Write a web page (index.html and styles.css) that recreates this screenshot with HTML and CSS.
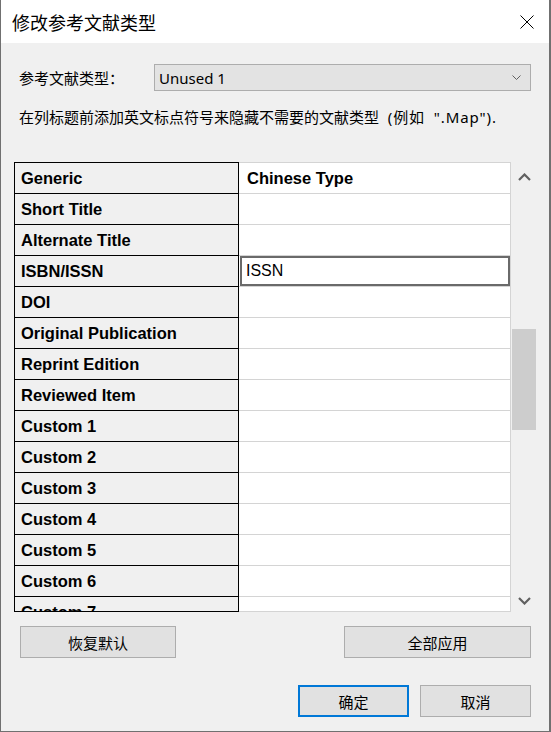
FILE: index.html
```html
<!DOCTYPE html>
<html lang="zh-CN">
<head>
<meta charset="utf-8">
<title>修改参考文献类型</title>
<link rel="stylesheet" href="styles.css">
</head>
<body>
<div class="window">
  <div class="titlebar">
    <div class="title">修改参考文献类型</div>
    <div class="close">
      <svg width="14" height="14" viewBox="0 0 14 14"><path d="M0.5 0.5 L13.5 13.5 M13.5 0.5 L0.5 13.5" stroke="#000" stroke-width="1" fill="none"/></svg>
    </div>
  </div>
  <div class="content">
    <div class="type-row">
      <div class="label">参考文献类型：</div>
      <div class="combo">
        <span class="combo-text">Unused 1</span>
        <svg class="combo-arrow" width="9" height="5" viewBox="0 0 9 5"><path d="M0.5 0.5 L4.5 4.5 L8.5 0.5" stroke="#606060" stroke-width="1" fill="none"/></svg>
      </div>
    </div>
    <div class="hint">在列标题前添加英文标点符号来隐藏不需要的文献类型<span class="hint-tail"> (例如 ".Map").</span></div>
    <div class="grid">
      <div class="col col-left">
        <div class="cell">Generic</div>
        <div class="cell">Short Title</div>
        <div class="cell">Alternate Title</div>
        <div class="cell">ISBN/ISSN</div>
        <div class="cell">DOI</div>
        <div class="cell">Original Publication</div>
        <div class="cell">Reprint Edition</div>
        <div class="cell">Reviewed Item</div>
        <div class="cell">Custom 1</div>
        <div class="cell">Custom 2</div>
        <div class="cell">Custom 3</div>
        <div class="cell">Custom 4</div>
        <div class="cell">Custom 5</div>
        <div class="cell">Custom 6</div>
        <div class="cell">Custom 7</div>
      </div>
      <div class="col col-right">
        <div class="cell head">Chinese Type</div>
        <div class="cell"></div>
        <div class="cell"></div>
        <div class="cell cell-edit"><div class="edit">ISSN</div></div>
        <div class="cell"></div>
        <div class="cell"></div>
        <div class="cell"></div>
        <div class="cell"></div>
        <div class="cell"></div>
        <div class="cell"></div>
        <div class="cell"></div>
        <div class="cell"></div>
        <div class="cell"></div>
        <div class="cell"></div>
        <div class="cell"></div>
      </div>
      <div class="scrollbar">
        <svg class="arrow" width="13" height="8" viewBox="0 0 13 8"><path d="M1 7 L6.5 1.5 L12 7" stroke="#606060" stroke-width="2.2" fill="none"/></svg>
        <div class="track"><div class="thumb"></div></div>
        <svg class="arrow" width="13" height="8" viewBox="0 0 13 8"><path d="M1 1 L6.5 6.5 L12 1" stroke="#606060" stroke-width="2.2" fill="none"/></svg>
      </div>
    </div>
    <div class="btn-row">
      <button class="btn btn-restore">恢复默认</button>
      <button class="btn btn-apply">全部应用</button>
    </div>
    <div class="btn-row end">
      <button class="btn btn-dlg default">确定</button>
      <button class="btn btn-dlg">取消</button>
    </div>
  </div>
</div>
</body>
</html>
```
FILE: styles.css
```css
* { box-sizing: border-box; }
html, body { margin: 0; padding: 0; }
body {
  width: 551px;
  height: 732px;
  overflow: hidden;
  font-family: "Noto Sans", "Noto Sans CJK SC", sans-serif;
  font-size: 15px;
  color: #000;
}
.window {
  width: 551px;
  height: 732px;
  border-left: 1px solid #707070;
  border-right: 2px solid #707070;
  border-bottom: 1px solid #707070;
  background: #f0f0f0;
  display: flex;
  flex-direction: column;
}
.titlebar {
  height: 43px;
  background: #fff;
  display: flex;
  align-items: center;
  justify-content: space-between;
  flex: 0 0 43px;
}
.title {
  font-family: "Noto Sans CJK SC", sans-serif;
  font-size: 18px;
  padding-left: 11px;
  line-height: 24px;
}
.close {
  width: 14px;
  height: 14px;
  margin-right: 15px;
  margin-top: 1px;
  display: flex;
}
.content {
  flex: 1;
  display: flex;
  flex-direction: column;
}
.type-row {
  margin: 21px 18px 0 18px;
  height: 27px;
  display: flex;
  align-items: center;
}
.label {
  flex: 0 0 135px;
  font-family: "Noto Sans CJK SC", sans-serif;
  line-height: 20px;
}
.combo {
  flex: 1;
  height: 27px;
  background: #e3e3e3;
  border: 1px solid #adadad;
  display: flex;
  align-items: center;
  justify-content: space-between;
  padding: 0 9px 0 4px;
}
.combo-text { line-height: 20px; }
.hint {
  margin: 16px 18px 0 18px;
  line-height: 20px;
  height: 20px;
  white-space: nowrap;
}
.hint-tail { letter-spacing: 0.9px; word-spacing: 4px; }
.grid {
  margin: 35px 0 0 13px;
  height: 450px;
  display: flex;
}
.col {
  height: 450px;
  overflow: hidden;
  display: flex;
  flex-direction: column;
}
.col-left {
  width: 225px;
  border: 1px solid #000;
  background: #f0f0f0;
}
.col-right {
  width: 272px;
  border-top: 1px solid #d4d4d4;
  border-right: 1px solid #d4d4d4;
  border-bottom: 1px solid #d4d4d4;
  background: #fff;
}
.cell {
  flex: 0 0 31px;
  height: 31px;
  display: flex;
  align-items: center;
  font-family: "Liberation Sans", Arial, sans-serif;
  font-size: 16.5px;
  font-weight: bold;
  white-space: nowrap;
}
.col-left .cell {
  border-bottom: 1px solid #000;
  padding-left: 6px;
}
.col-right .cell {
  border-bottom: 1px solid #d4d4d4;
  padding-left: 8px;
}
.col-right .cell-edit { padding-left: 1px; }
.edit {
  width: 270px;
  height: 30px;
  border: 2px solid #6a6a6a;
  font-weight: normal;
  font-size: 16px;
  display: flex;
  align-items: center;
  padding-left: 4px;
  align-self: flex-start;
}
.scrollbar {
  width: 27px;
  height: 450px;
  display: flex;
  flex-direction: column;
  align-items: center;
  background: #f0f0f0;
}
.arrow { flex: 0 0 auto; }
.scrollbar .arrow:first-child { margin-top: 11px; }
.scrollbar .arrow:last-child { margin-bottom: 7px; }
.track {
  flex: 1;
  width: 100%;
}
.thumb {
  margin: 148px 0 0 1px;
  width: 24px;
  height: 101px;
  background: #cdcdcd;
}
.btn-row {
  display: flex;
  justify-content: space-between;
  padding: 0 18px 0 19px;
  margin-top: 14px;
}
.btn-row.end {
  justify-content: flex-end;
  gap: 11px;
  margin-top: 27px;
}
.btn {
  height: 32px;
  background: #e1e1e1;
  border: 1px solid #adadad;
  font-family: "Noto Sans CJK SC", sans-serif;
  font-size: 15px;
  color: #000;
  padding: 0;
  margin: 0;
}
.btn-restore { width: 156px; }
.btn-apply { width: 187px; }
.btn-dlg { width: 111px; }
.btn.default { border: 2px solid #0078d7; }
```
